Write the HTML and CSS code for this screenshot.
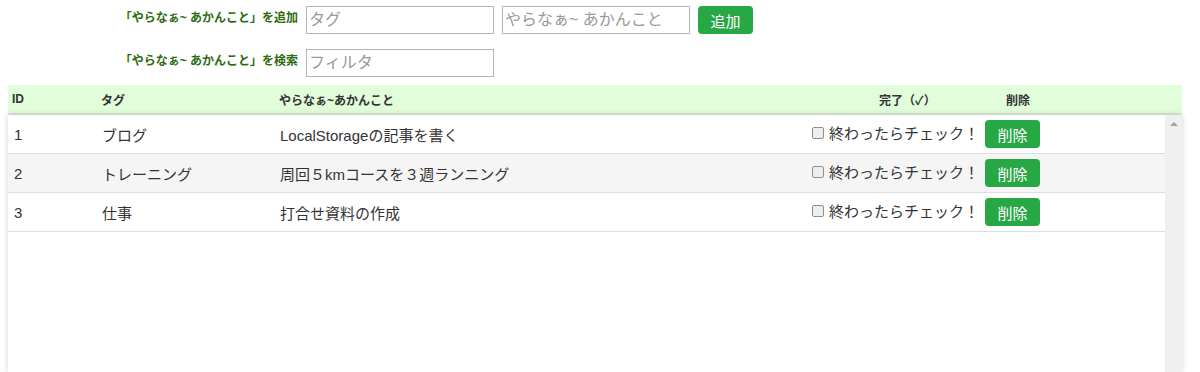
FILE: index.html
```html
<!DOCTYPE html>
<html lang="ja">
<head>
    <meta charset="UTF-8">
    <title>やらなぁ~あかんこと</title>
    <link rel="stylesheet" href="styles.css">
</head>
<body>
    <div class="app">
        <div class="form-row">
            <label class="form-label">「やらなぁ~ あかんこと」を追加</label>
            <input class="text-input" type="text" placeholder="タグ">
            <input class="text-input" type="text" placeholder="やらなぁ~ あかんこと">
            <button class="btn">追加</button>
        </div>
        <div class="form-row">
            <label class="form-label">「やらなぁ~ あかんこと」を検索</label>
            <input class="text-input" type="text" placeholder="フィルタ">
        </div>

        <div class="todo-table">
            <div class="todo-head">
                <div>ID</div>
                <div>タグ</div>
                <div>やらなぁ~あかんこと</div>
                <div>完了（✓）</div>
                <div>削除</div>
            </div>
            <div class="todo-body">
                <div class="todo-list">
                    <div class="todo-row">
                        <div>1</div>
                        <div>ブログ</div>
                        <div>LocalStorageの記事を書く</div>
                        <div><label class="check"><input type="checkbox">終わったらチェック！</label></div>
                        <div><button class="btn">削除</button></div>
                    </div>
                    <div class="todo-row">
                        <div>2</div>
                        <div>トレーニング</div>
                        <div>周回５kmコースを３週ランニング</div>
                        <div><label class="check"><input type="checkbox">終わったらチェック！</label></div>
                        <div><button class="btn">削除</button></div>
                    </div>
                    <div class="todo-row">
                        <div>3</div>
                        <div>仕事</div>
                        <div>打合せ資料の作成</div>
                        <div><label class="check"><input type="checkbox">終わったらチェック！</label></div>
                        <div><button class="btn">削除</button></div>
                    </div>
                </div>
                <!-- スクロールバー（中身が少ないのでつまみ無し） -->
                <div class="scroll-track">
                    <span class="scroll-up"></span>
                </div>
            </div>
        </div>
    </div>
</body>
</html>
```

FILE: styles.css
```css
body {
    margin: 0;
    font-family: "Liberation Sans", "Noto Sans CJK JP", sans-serif;
    color: #333;
    background-color: #fff;
}

.app {
    padding: 6px 0 0 8px;
}

/* 入力フォーム */
.form-row {
    display: flex;
    align-items: flex-start;
    gap: 8px;
    margin-bottom: 15px;
}

.form-label {
    width: 290px;
    padding-top: 4px;
    text-align: right;
    font-size: 12px;
    font-weight: bold;
    line-height: 16px;
    color: #2e6b10;
}

.text-input {
    box-sizing: border-box;
    width: 188px;
    height: 28px;
    margin: 0;
    padding: 0 2px;
    border: 1px solid #b5b5b5;
    font-family: inherit;
    font-size: 16px;
    color: #333;
}

.text-input::placeholder {
    color: #999;
}

.btn {
    box-sizing: border-box;
    width: 55px;
    height: 28px;
    padding: 0;
    border: none;
    border-radius: 4px;
    background-color: #28a745;
    color: #fff;
    font-family: inherit;
    font-size: 15px;
    cursor: pointer;
}

/* 一覧 */
.todo-table {
    width: 1174px;
    margin-top: -7px;
}

.todo-head {
    display: grid;
    grid-template-columns: 89px 178px 600px 127px 1fr;
    height: 28px;
    align-items: center;
    background-color: #e2fdda;
    border-bottom: 2px solid #dde8da;
    font-size: 12px;
    font-weight: bold;
    color: #333;
}

.todo-head div {
    padding-left: 4px;
}

.todo-body {
    display: flex;
    height: 257px;
    overflow: hidden;
    box-shadow: 0 0 6px rgba(0, 0, 0, 0.18);
}

.todo-list {
    flex: 1;
}

.scroll-track {
    width: 17px;
    background-color: #f0f0f0;
}

.scroll-up {
    display: block;
    width: 0;
    height: 0;
    margin: 7px auto 0;
    border-left: 4px solid transparent;
    border-right: 4px solid transparent;
    border-bottom: 4px solid #a3a3a3;
}

.todo-row {
    display: grid;
    grid-template-columns: 88px 178px 530px 175px 1fr;
    align-items: center;
    height: 38px;
    border-bottom: 1px solid #ddd;
    font-size: 15px;
}

.todo-row:nth-child(even) {
    background-color: #f5f5f5;
}

.todo-row div {
    padding-left: 6px;
    white-space: nowrap;
}

.check {
    display: flex;
    align-items: center;
    margin-top: -3px;
}

.check input {
    appearance: none;
    box-sizing: border-box;
    width: 12px;
    height: 12px;
    margin: 0 5px 0 2px;
    border: 1px solid #8f8f8f;
    border-radius: 2px;
    background-color: #ededed;
}
```
